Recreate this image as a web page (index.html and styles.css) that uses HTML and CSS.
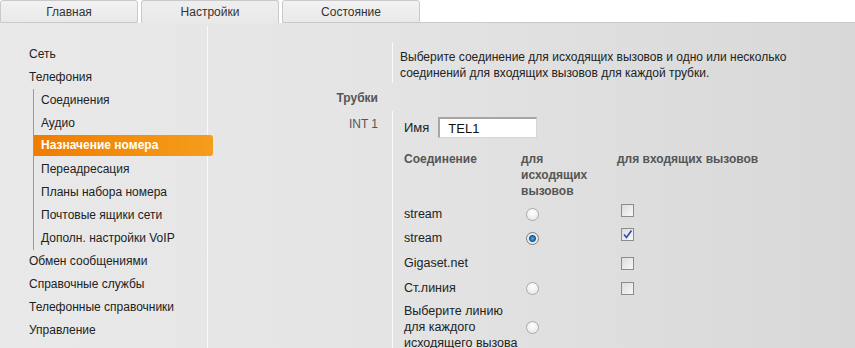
FILE: index.html
```html
<!DOCTYPE html>
<html lang="ru">

<head>
    <meta charset="UTF-8">
    <title>Назначение номера</title>
    <link rel="stylesheet" href="styles.css">
</head>

<body>
    <div class="tabs">
        <div class="tab">Главная</div>
        <div class="tab active">Настройки</div>
        <div class="tab">Состояние</div>
        <div class="tabs-rest"></div>
    </div>

    <div class="page">
        <div class="sidebar">
            <ul class="menu">
                <li>Сеть</li>
                <li>Телефония
                    <ul class="submenu">
                        <li>Соединения</li>
                        <li>Аудио</li>
                        <li class="current">Назначение номера</li>
                        <li>Переадресация</li>
                        <li>Планы набора номера</li>
                        <li>Почтовые ящики сети</li>
                        <li>Дополн. настройки VoIP</li>
                    </ul>
                </li>
                <li>Обмен сообщениями</li>
                <li>Справочные службы</li>
                <li>Телефонные справочники</li>
                <li>Управление</li>
            </ul>
        </div>

        <div class="content">
            <div class="row intro">
                <div class="label"></div>
                <div class="field">
                    Выберите соединение для исходящих вызовов и одно или несколько
                    соединений для входящих вызовов для каждой трубки.
                </div>
            </div>
            <div class="row section">
                <div class="label">Трубки</div>
                <div class="field"></div>
            </div>
            <div class="row">
                <div class="label plain">INT 1</div>
                <div class="field">
                    <div class="name-line">
                        <span>Имя</span>
                        <span class="textbox">TEL1</span>
                    </div>
                    <table class="lines">
                        <tr class="head">
                            <th class="c1">Соединение</th>
                            <th class="c2">для<br>исходящих<br>вызовов</th>
                            <th>для входящих вызовов</th>
                        </tr>
                        <tr>
                            <td>stream</td>
                            <td><span class="radio"></span></td>
                            <td><span class="check up"></span></td>
                        </tr>
                        <tr>
                            <td>stream</td>
                            <td><span class="radio on"></span></td>
                            <td><span class="check up"><svg width="11" height="11" viewBox="0 0 11 11"><path d="M2 5.5 L4.5 8.5 L9.5 1.5" fill="none" stroke="#2a4fa8" stroke-width="1.6"/></svg></span></td>
                        </tr>
                        <tr class="tall">
                            <td>Gigaset.net</td>
                            <td></td>
                            <td><span class="check"></span></td>
                        </tr>
                        <tr>
                            <td>Ст.линия</td>
                            <td><span class="radio"></span></td>
                            <td><span class="check"></span></td>
                        </tr>
                        <tr class="multi">
                            <td>Выберите линию<br>для каждого<br>исходящего вызова</td>
                            <td><span class="radio"></span></td>
                            <td></td>
                        </tr>
                    </table>
                </div>
            </div>
        </div>
    </div>
</body>

</html>
```

FILE: styles.css
```css
body {
    margin: 0;
    font-family: 'Liberation Sans', Arial, sans-serif;
    font-size: 12px;
    color: #222;
    background: #fff;
    overflow: hidden;
}

/* tabs */

.tabs {
    display: flex;
    gap: 3px;
    height: 23px;
    background: #fff;
}

.tab {
    width: 136px;
    height: 21px;
    line-height: 22px;
    text-align: center;
    color: #333;
    background: linear-gradient(#f2f2f2, #e9e9e9);
    border: 1px solid #c9c9c9;
    border-radius: 3px 3px 0 0;
}

.tab.active {
    height: 22px;
    border-bottom: none;
    background: linear-gradient(#eeeeee, #e9e9e9);
}

.tabs-rest {
    flex: 1;
    border-bottom: 1px solid #c9c9c9;
    margin-left: -3px;
}

/* page */

.page {
    display: flex;
    height: 325px;
    overflow: hidden;
    background: linear-gradient(90deg, #e9e9e9 0%, #e5e5e5 40%, #d8d8d8 100%);
}

.sidebar {
    width: 207px;
    margin-top: 3px;
    border-right: 1px solid #fafafa;
}

.menu {
    list-style: none;
    margin: 0;
    padding: 17px 0 0 29px;
}

.menu li {
    line-height: 23px;
}

.submenu {
    list-style: none;
    margin: 0 0 0 4px;
    padding: 0;
    border-left: 1px solid #9a9a9a;
}

.submenu li {
    padding-left: 7px;
}

.submenu li.current {
    margin-bottom: 2px;
    width: 172px;
    height: 21px;
    line-height: 21px;
    color: #fff;
    font-weight: bold;
    background: linear-gradient(90deg, #ef7d00, #f59d1c);
    border-radius: 0 3px 3px 0;
}

.content {
    flex: 1;
    padding-top: 19px;
}

.row {
    display: flex;
}

.label {
    width: 170px;
    padding-right: 14px;
    text-align: right;
    font-weight: bold;
    color: #555;
}

.label.plain {
    font-weight: normal;
    padding-top: 6px;
}

.field {
    flex: 1;
    border-left: 1px solid #fafafa;
    padding-left: 7px;
}

.intro .field {
    height: 41px;
    padding-top: 7px;
    box-sizing: border-box;
    line-height: 16px;
}

.section {
    height: 28px;
}

.section .label {
    padding-top: 8px;
}

.section .field {
    border-left-color: transparent;
}

/* name */

.name-line {
    display: flex;
    align-items: center;
    gap: 9px;
    padding: 6px 0 0 4px;
    font-size: 13px;
}

.textbox {
    width: 88px;
    height: 18px;
    line-height: 19px;
    padding-left: 8px;
    background: #fff;
    border-top: 2px solid #a6a6a6;
    border-left: 2px solid #a6a6a6;
    border-right: 1px solid #d6d6d6;
    border-bottom: 1px solid #d6d6d6;
    color: #111;
}

/* connections table */

.lines {
    border-collapse: collapse;
    margin: 13px 0 0 4px;
}

.lines th {
    text-align: left;
    vertical-align: top;
    font-weight: bold;
    color: #555;
    line-height: 16px;
    padding: 0 0 3px;
}

.lines .c1 {
    width: 117px;
}

.lines .c2 {
    width: 96px;
}

.lines td {
    padding: 0;
    height: 24px;
    line-height: 16px;
    vertical-align: middle;
    font-size: 12.5px;
}

.lines tr.tall td {
    height: 26px;
}

.lines tr.multi td {
    padding-top: 3px;
    height: auto;
}

.radio {
    display: inline-block;
    width: 11px;
    height: 11px;
    margin-left: 5px;
    border: 1px solid #a8a8a8;
    border-radius: 50%;
    background: radial-gradient(circle at 50% 35%, #ffffff, #e4e4e4);
    vertical-align: middle;
}

.radio.on {
    background: radial-gradient(circle, #5ab0e8 0, #0a5a9e 3px, #e8e8e8 4px, #f4f4f4 6px);
    border-color: #7a7a7a;
}

.check {
    display: inline-block;
    width: 11px;
    height: 11px;
    margin-left: 4px;
    border: 1px solid #8c8c8c;
    background: linear-gradient(135deg, #dcdcdc, #f8f8f8);
    vertical-align: middle;
    position: relative;
}

.check.up {
    top: -4px;
}

.check svg {
    display: block;
}
```
